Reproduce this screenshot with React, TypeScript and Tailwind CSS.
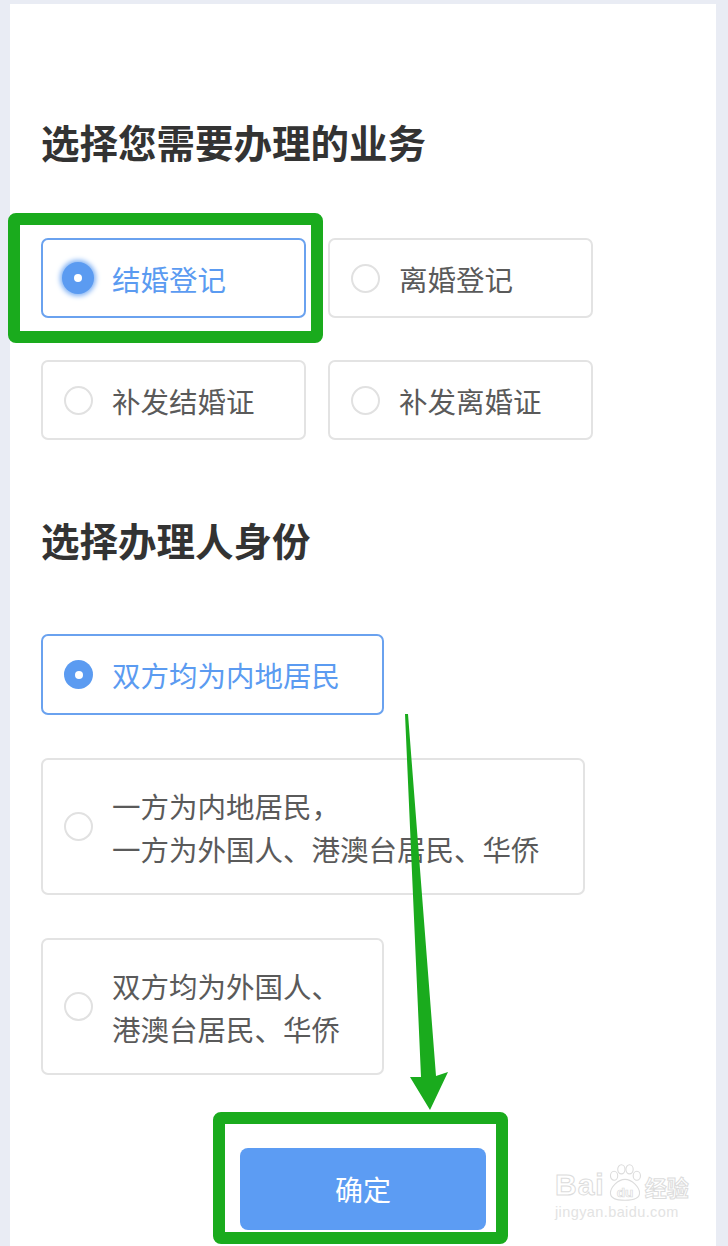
import React from "react";

const font = { fontFamily: '"Noto Sans CJK SC", "Noto Sans", sans-serif' };

interface OptionProps {
  label: string[];
  selected?: boolean;
  glow?: boolean;
  className: string;
}

function Radio({ selected, glow }: { selected?: boolean; glow?: boolean }) {
  if (selected) {
    return (
      <div
        className={`flex items-center justify-center w-[29px] h-[29px] rounded-full bg-[#5b9bf1] shrink-0 ${
          glow ? "shadow-[0_0_5px_2px_#7fb1f4] w-[32px] h-[32px] -ml-[2px] mr-[-1px]" : ""
        }`}
      >
        <div className="w-[8px] h-[8px] rounded-full bg-white" />
      </div>
    );
  }
  return <div className="w-[29px] h-[29px] rounded-full border-2 border-[#e1e1e1] shrink-0" />;
}

function Option({ label, selected, glow, className }: OptionProps) {
  return (
    <div
      className={`flex items-center gap-[19px] pl-[21px] rounded-[7px] border-2 ${
        selected ? "border-[#6aa2ef]" : "border-[#e3e3e3]"
      } ${className}`}
    >
      <Radio selected={selected} glow={glow} />
      <div className={`text-[28.5px] leading-[43px] whitespace-nowrap ${selected ? "text-[#5b9bf1]" : "text-[#5a5a5a]"}`}>
        {label.map((l) => (
          <div key={l}>{l}</div>
        ))}
      </div>
    </div>
  );
}

function Watermark() {
  return (
    <div className="absolute left-[555px] top-[1163px] w-[150px] whitespace-nowrap">
      <div className="flex items-end">
        <span
          className="text-[30px] leading-[30px] font-bold tracking-[1px] [-webkit-text-stroke:1px_#dcdcdc] text-white"
          style={{ fontFamily: '"Liberation Sans", sans-serif' }}
        >
          Bai
        </span>
        <svg width="40" height="40" viewBox="0 0 44 42" className="-mb-[3px] shrink-0">
          <g fill="white" stroke="#dcdcdc" strokeWidth="1.2">
            <ellipse cx="10" cy="13" rx="4" ry="5" />
            <ellipse cx="18" cy="6" rx="4" ry="5" />
            <ellipse cx="27" cy="6" rx="4" ry="5" />
            <ellipse cx="35" cy="13" rx="4" ry="5" />
            <path d="M22 17 C30 17 38 26 38 32 C38 38 32 40 22 40 C12 40 6 38 6 32 C6 26 14 17 22 17 Z" />
          </g>
          <text
            x="22"
            y="36"
            textAnchor="middle"
            fontSize="15"
            fontWeight="bold"
            fill="white"
            stroke="#dcdcdc"
            strokeWidth="0.8"
            fontFamily="Liberation Sans, sans-serif"
          >
            du
          </text>
        </svg>
        <span
          className="text-[22px] leading-[28px] font-bold text-white [-webkit-text-stroke:1px_#dcdcdc] shrink-0"
          style={font}
        >
          经验
        </span>
      </div>
      <div
        className="text-[14.5px] leading-[16px] mt-[4px] text-[#e3e3e3] tracking-[0.4px]"
        style={{ fontFamily: '"Liberation Sans", sans-serif' }}
      >
        jingyan.baidu.com
      </div>
    </div>
  );
}

export default function App() {
  return (
    <div className="relative w-[728px] h-[1246px] overflow-hidden bg-[#e9ecf4]" style={font}>
      <div className="ml-[10px] mt-[4px] w-[706px] h-[1242px] bg-white pl-[31px] pt-[114px]">
        {/* 业务 */}
        <h1 className="text-[38.5px] leading-[46px] font-bold text-[#333]">选择您需要办理的业务</h1>
        <div className="grid grid-cols-[265px_265px] gap-x-[22px] gap-y-[42px] mt-[74px]">
          <Option label={["结婚登记"]} selected glow className="h-[80px]" />
          <Option label={["离婚登记"]} className="h-[80px]" />
          <Option label={["补发结婚证"]} className="h-[80px]" />
          <Option label={["补发离婚证"]} className="h-[80px]" />
        </div>

        {/* 身份 */}
        <h1 className="text-[38.5px] leading-[46px] font-bold text-[#333] mt-[76px]">选择办理人身份</h1>
        <div className="flex flex-col gap-[43px] mt-[72px]">
          <Option label={["双方均为内地居民"]} selected className="w-[343px] h-[81px]" />
          <Option
            label={["一方为内地居民，", "一方为外国人、港澳台居民、华侨"]}
            className="w-[544px] h-[137px]"
          />
          <Option label={["双方均为外国人、", "港澳台居民、华侨"]} className="w-[343px] h-[137px]" />
        </div>

        <div className="flex justify-center pr-[31px] mt-[73px]">
          <button className="w-[246px] h-[82px] rounded-[8px] bg-[#5c9cf3] text-white text-[28px]">确定</button>
        </div>
      </div>

      <Watermark />

      {/* annotations */}
      <div className="absolute left-[8px] top-[213px] w-[315px] h-[130px] border-[12px] border-[#1aab1d] rounded-[8px]" />
      <div className="absolute left-[213px] top-[1112px] w-[295px] h-[132px] border-[12px] border-[#1aab1d] rounded-[8px]" />
      <svg className="absolute left-0 top-0" width="728" height="1246">
        <polygon points="405,714 408,714 436,1076 448,1072 430,1110 410,1077 421,1077" fill="#1aab1d" />
      </svg>
    </div>
  );
}
